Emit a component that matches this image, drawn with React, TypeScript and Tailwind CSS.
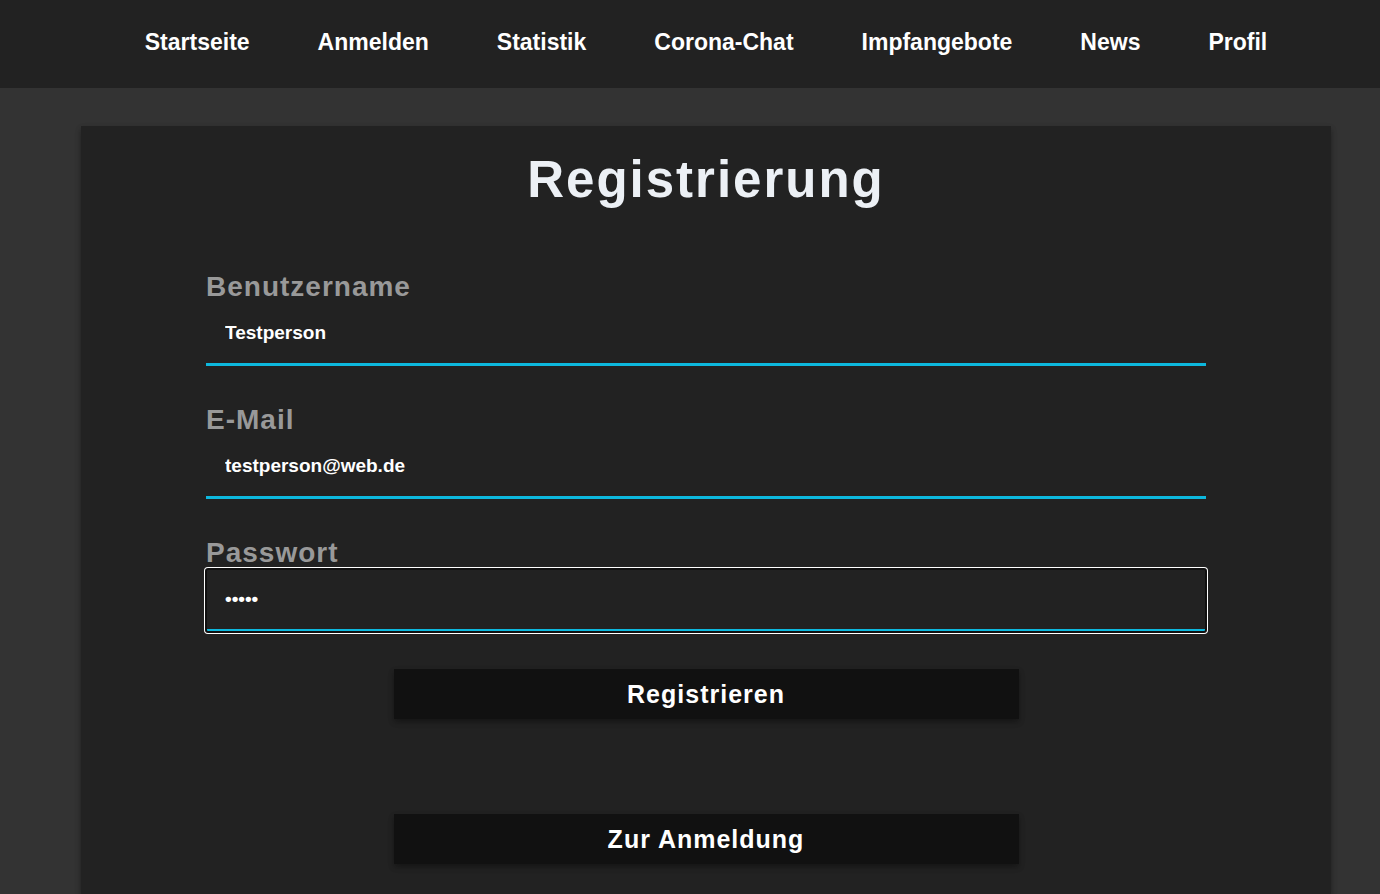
import React from "react";

const navItems = ["Startseite", "Anmelden", "Statistik", "Corona-Chat", "Impfangebote", "News", "Profil"];

type FieldProps = {
  id: string;
  label: string;
  type: string;
  value: string;
  active?: boolean;
};

function Field({ id, label, type, value, active }: FieldProps) {
  return (
    <div className="flex flex-col">
      <label htmlFor={id} className="text-[28px] leading-8 tracking-[1px] text-[#999999]">
        {label}
      </label>
      <input
        id={id}
        type={type}
        defaultValue={value}
        className={
          "h-[63px] w-full border-b-[3px] border-[#0db8de] bg-transparent px-[19px] pb-px text-[19px] font-bold text-white " +
          (active
            ? "rounded-[2px] shadow-[0_0_0_2px_#ffffff] outline-2 -outline-offset-1 outline-[#101010]"
            : "outline-none")
        }
      />
    </div>
  );
}

const buttonClass =
  "h-[50px] w-[62.5%] cursor-pointer bg-[#111111] pt-[2px] text-[25px] font-bold tracking-[1px] text-white shadow-[0_3px_6px_rgba(0,0,0,0.16),0_3px_6px_rgba(0,0,0,0.23)]";

export default function App() {
  return (
    <div className="flex min-h-screen flex-col bg-[#333333] font-['Liberation_Sans',Arial,sans-serif] font-bold">
      <nav className="flex h-[88px] items-center justify-center gap-[68px] bg-[#222222] pb-1 pl-8 text-[23px] leading-7 text-white">
        {navItems.map((item) => (
          <a key={item} href="#" className="whitespace-nowrap">
            {item}
          </a>
        ))}
      </nav>
      <main className="flex grow flex-col pt-[38px] pr-[49px] pl-[81px]">
        <section className="flex grow flex-col items-center bg-[#222222] pt-6 pb-6 shadow-[0_3px_6px_rgba(0,0,0,0.16),0_3px_6px_rgba(0,0,0,0.23)]">
          <h1 className="text-[51px] leading-[60px] tracking-[2px] text-[#ecf0f5]">Registrierung</h1>
          <form className="mt-[61px] flex w-4/5 flex-col items-center" onSubmit={(e) => e.preventDefault()}>
            <div className="flex w-full flex-col gap-[38px]">
              <Field id="username" label="Benutzername" type="text" value="Testperson" />
              <Field id="email" label="E-Mail" type="email" value="testperson@web.de" />
              <Field id="password" label="Passwort" type="password" value="12345" active />
            </div>
            <button type="submit" className={buttonClass + " mt-[37px]"}>
              Registrieren
            </button>
            <button type="button" className={buttonClass + " mt-[95px]"}>
              Zur Anmeldung
            </button>
          </form>
        </section>
      </main>
    </div>
  );
}
